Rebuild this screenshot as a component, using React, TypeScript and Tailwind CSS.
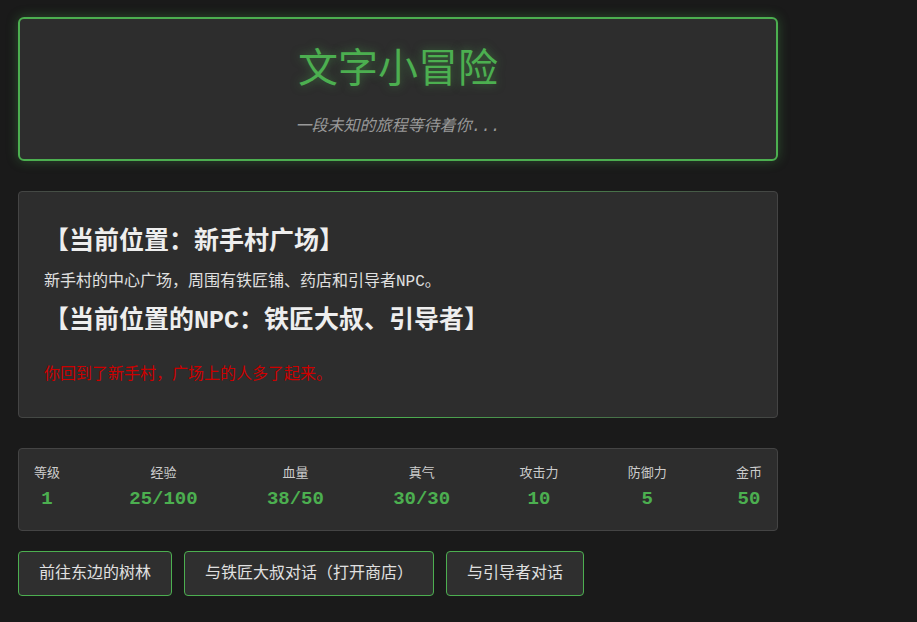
import React from "react";

const stats = [
  { label: "等级", value: "1" },
  { label: "经验", value: "25/100" },
  { label: "血量", value: "38/50" },
  { label: "真气", value: "30/30" },
  { label: "攻击力", value: "10" },
  { label: "防御力", value: "5" },
  { label: "金币", value: "50" },
];

const actions = ["前往东边的树林", "与铁匠大叔对话（打开商店）", "与引导者对话"];

export default function App() {
  return (
    <div
      className="min-h-[622px] bg-[#1a1a1a] text-[#e0e0e0] px-[18px] pt-[17px]"
      style={{ fontFamily: '"Liberation Mono", "Noto Sans CJK SC", monospace' }}
    >
      <div className="w-[760px]">
        {/* Header */}
        <div className="h-[144px] rounded-md border-2 border-[#4caf50] bg-[#2d2d2d] shadow-[0_0_12px_rgba(76,175,80,0.35)] flex flex-col items-center">
          <h1 className="mt-[29px] text-[40px] leading-[48px] text-[#4caf50] [text-shadow:0_0_10px_rgba(76,175,80,0.5)]">
            文字小冒险
          </h1>
          <p className="mt-[21px] text-[16px] leading-[20px] italic text-[#999]">一段未知的旅程等待着你...</p>
        </div>

        {/* Scene */}
        <div className="relative mt-[30px] h-[227px] rounded bg-[#2d2d2d] border border-[#444] px-[25px] pt-[36px]">
          <div className="absolute left-0 right-0 -top-px h-px bg-gradient-to-r from-transparent via-[#4caf50] to-transparent" />
          <div className="absolute left-0 right-0 -bottom-px h-px bg-gradient-to-r from-transparent via-[#4caf50] to-transparent" />
          <h3 className="text-[25px] leading-[30px] font-bold text-[#eee]">【当前位置：新手村广场】</h3>
          <p className="mt-[14px] text-[16px] leading-[20px]">新手村的中心广场，周围有铁匠铺、药店和引导者NPC。</p>
          <h3 className="mt-[15px] text-[25px] leading-[30px] font-bold text-[#eee]">【当前位置的NPC：铁匠大叔、引导者】</h3>
          <p className="mt-[28px] text-[16px] leading-[20px] text-[#cc0000]">你回到了新手村，广场上的人多了起来。</p>
        </div>

        {/* Stats */}
        <div className="mt-[30px] h-[83px] rounded bg-[#2d2d2d] border border-[#444] px-[15px] pt-[16px] flex justify-between">
          {stats.map(s => (
            <div key={s.label} className="flex flex-col items-center">
              <span className="text-[13px] leading-[18px] text-[#ccc]">{s.label}</span>
              <span className="mt-[5px] text-[19px] leading-[22px] font-bold text-[#4caf50]">{s.value}</span>
            </div>
          ))}
        </div>

        {/* Actions */}
        <div className="mt-[20px] flex gap-[12px]">
          {actions.map(a => (
            <button
              key={a}
              className="h-[45px] px-[20px] rounded border border-[#4caf50] bg-[#2f2f2f] text-[16px] text-[#e0e0e0]"
            >
              {a}
            </button>
          ))}
        </div>
      </div>
    </div>
  );
}
